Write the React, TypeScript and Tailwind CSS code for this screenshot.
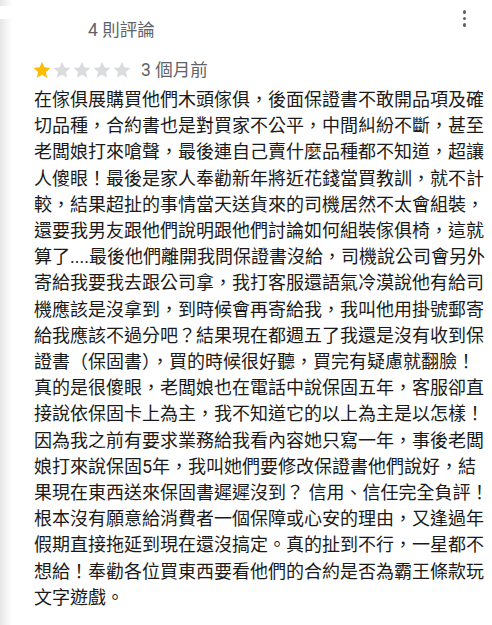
import React from "react";

const lines = [
  "在傢俱展購買他們木頭傢俱，後面保證書不敢開品項及確",
  "切品種，合約書也是對買家不公平，中間糾紛不斷，甚至",
  "老闆娘打來嗆聲，最後連自己賣什麼品種都不知道，超讓",
  "人傻眼！最後是家人奉勸新年將近花錢當買教訓，就不計",
  "較，結果超扯的事情當天送貨來的司機居然不太會組裝，",
  "還要我男友跟他們說明跟他們討論如何組裝傢俱椅，這就",
  "算了....最後他們離開我問保證書沒給，司機說公司會另外",
  "寄給我要我去跟公司拿，我打客服還語氣冷漠說他有給司",
  "機應該是沒拿到，到時候會再寄給我，我叫他用掛號郵寄",
  "給我應該不過分吧？結果現在都週五了我還是沒有收到保",
  "證書（保固書），買的時候很好聽，買完有疑慮就翻臉！",
  "真的是很傻眼，老闆娘也在電話中說保固五年，客服卻直",
  "接說依保固卡上為主，我不知道它的以上為主是以怎樣！",
  "因為我之前有要求業務給我看內容她只寫一年，事後老闆",
  "娘打來說保固5年，我叫她們要修改保證書他們說好，結",
  "果現在東西送來保固書遲遲沒到？ 信用、信任完全負評！",
  "根本沒有願意給消費者一個保障或心安的理由，又逢過年",
  "假期直接拖延到現在還沒搞定。真的扯到不行，一星都不",
  "想給！奉勸各位買東西要看他們的合約是否為霸王條款玩",
  "文字遊戲。",
];

function Star({ filled }: { filled: boolean }) {
  return (
    <svg viewBox="0 0 24 24" className="w-[20px] h-[20px]">
      <path
        d="M12 2.2l2.95 6.6 7.2.72-5.42 4.82 1.56 7.06L12 17.75 5.71 21.4l1.56-7.06L1.85 9.52l7.2-.72z"
        fill={filled ? "#fbbc04" : "#dadce0"}
      />
    </svg>
  );
}

export default function App() {
  return (
    <div
      className="w-[492px] h-[625px] bg-white flex flex-row overflow-hidden"
      style={{ fontFamily: 'Roboto, Arial, "Noto Sans CJK TC", sans-serif' }}
    >
      <div className="w-[12px] flex flex-col shrink-0">
        <div className="h-[6px] bg-[linear-gradient(to_right,#e6e6e6,#ffffff)]" />
        <div className="h-[13px] bg-white" />
        <div className="flex-1 bg-[linear-gradient(to_right,#e6e6e6,#ffffff)]" />
      </div>
      <div className="flex-1 flex flex-col">
        <div className="flex flex-row justify-between items-start">
          <div className="mt-[20px] ml-[76px] text-[17.5px] leading-[21px] text-[#5f6368]">
            4 則評論
          </div>
          <div className="mt-[10px] mr-[26px] flex flex-col gap-[3px] items-center">
            <span className="w-[3.5px] h-[3.5px] rounded-full bg-[#5f6368]" />
            <span className="w-[3.5px] h-[3.5px] rounded-full bg-[#5f6368]" />
            <span className="w-[3.5px] h-[3.5px] rounded-full bg-[#5f6368]" />
          </div>
        </div>
        <div className="mt-[19px] ml-[19.5px] flex flex-row items-center h-[20px]">
          <div className="flex flex-row">
            <Star filled />
            <Star filled={false} />
            <Star filled={false} />
            <Star filled={false} />
            <Star filled={false} />
          </div>
          <span className="ml-[9.5px] text-[17.5px] leading-[20px] text-[#5f6368]">3 個月前</span>
        </div>
        <div className="mt-[7px] ml-[22px] text-[18px] leading-[26.2px] text-[#1a1a1a] whitespace-nowrap">
          {lines.map((l, i) => (
            <div key={i}>{l}</div>
          ))}
        </div>
      </div>
    </div>
  );
}
